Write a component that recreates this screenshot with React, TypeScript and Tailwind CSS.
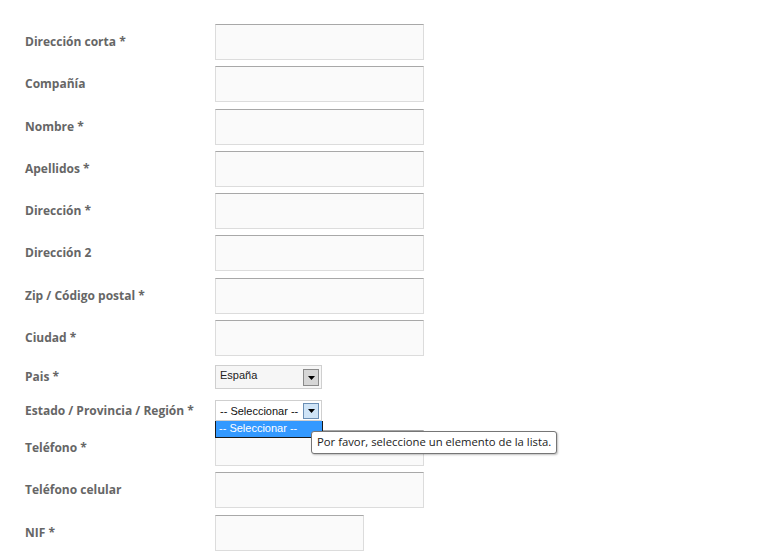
import React from "react";

const labelCls = "w-[215px] shrink-0 pl-[25px] text-[12px] font-bold text-[#666] [font-family:'Open_Sans',sans-serif]";
const inputCls = "h-[36px] border border-[#dcdcdc] border-t-[#a8a8a8] bg-[#fafafa]";

function InputRow({ label, w = "w-[209px]" }: { label: string; w?: string }) {
  return (
    <div className="flex items-center h-[36px]">
      <div className={labelCls}>{label}</div>
      <div className={`${inputCls} ${w}`} />
    </div>
  );
}

function Arrow({ active }: { active?: boolean }) {
  return (
    <div
      className={
        active
          ? "w-[16px] h-[16px] border border-[#6b8fb5] bg-[#cfe4f7] flex items-center justify-center"
          : "w-[16px] h-[17px] border border-[#8a8a8a] bg-[#d6d6d6] flex items-center justify-center"
      }
    >
      <svg width="7" height="4" viewBox="0 0 7 4">
        <path d="M0 0H7L3.5 4Z" fill="#000" />
      </svg>
    </div>
  );
}

export default function App() {
  const rows = [
    "Dirección corta *",
    "Compañía",
    "Nombre *",
    "Apellidos *",
    "Dirección *",
    "Dirección 2",
    "Zip / Código postal *",
    "Ciudad *",
  ];
  return (
    <div className="w-[762px] h-[558px] bg-white overflow-hidden pt-[24px] relative">
      <div className="flex flex-col gap-[6.3px]">
        {rows.map((r) => (
          <InputRow key={r} label={r} />
        ))}
      </div>
      {/* Pais */}
      <div className="flex items-center h-[24px] mt-[9px]">
        <div className={labelCls}>Pais *</div>
        <div className="w-[107px] h-[24px] border border-[#cfcfcf] bg-[#f6f6f6] flex items-start justify-between pl-[4px] pr-[2px] pt-[2px]">
          <span className="text-[11px] text-[#222] [font-family:'Liberation_Sans',sans-serif] leading-[14px]">España</span>
          <div className="mt-[1px]"><Arrow /></div>
        </div>
      </div>
      {/* Estado */}
      <div className="flex items-center h-[21px] mt-[11px] relative">
        <div className={labelCls}>Estado / Provincia / Región *</div>
        <div className="relative">
          <div className="w-[107px] h-[21px] border border-[#cfcfcf] bg-white flex items-center justify-between pl-[4px] pr-[2px]">
            <span className="text-[11px] text-[#111] [font-family:'Liberation_Sans',sans-serif] leading-[14px]">-- Seleccionar --</span>
            <Arrow active />
          </div>
          <div className="absolute left-0 top-[21px] w-[108px] h-[17px] bg-[#3399ff] border border-[#1a1a1a] border-t-0 z-10 pl-[3px] text-[11px] leading-[14px] text-white [font-family:'Liberation_Sans',sans-serif]">
            -- Seleccionar --
          </div>
          <div className="absolute left-[96px] top-[31px] z-20 h-[23px] px-[5px] flex items-center bg-white border border-[#767676] rounded-[3px] shadow-[1px_1px_2px_rgba(0,0,0,0.25)] whitespace-nowrap text-[11.3px] text-[#222] [font-family:'Open_Sans',sans-serif]">
            Por favor, seleccione un elemento de la lista.
          </div>
        </div>
      </div>
      <div className="flex flex-col gap-[6.3px] mt-[9px]">
        <InputRow label="Teléfono *" />
        <InputRow label="Teléfono celular" />
        <InputRow label="NIF *" w="w-[149px]" />
      </div>
    </div>
  );
}
